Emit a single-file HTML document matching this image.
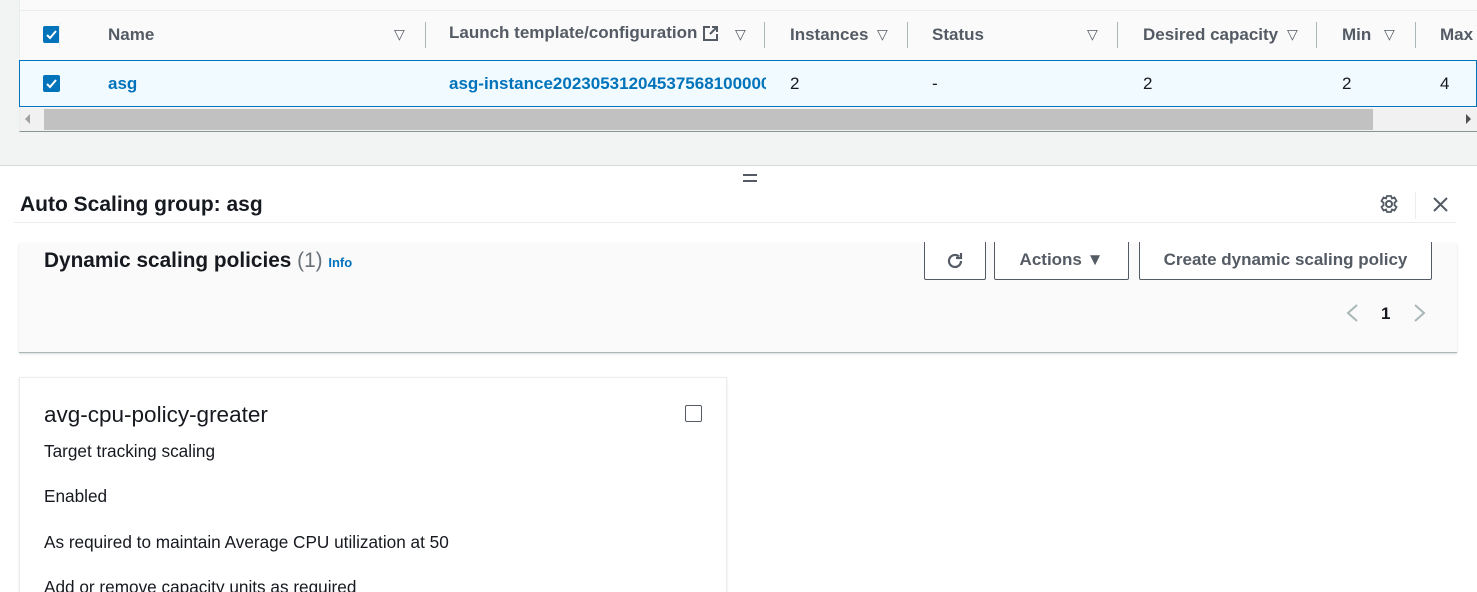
<!DOCTYPE html>
<html style="overflow:hidden;height:592px"><head><style>
*{box-sizing:border-box;margin:0;padding:0}
body{width:1477px;height:592px;overflow:hidden;background:#fff;font-family:"Liberation Sans",sans-serif;color:#16191f;position:relative}
.a{position:absolute}
.top{left:0;top:0;width:1477px;height:166px;background:#f2f3f3;border-bottom:1px solid #d5dbdb}
.tbl{left:19px;top:0;width:1458px;height:132px;background:#fafafa;border-bottom:1px solid #879596;border-left:1px solid #eaeded}
.h{top:25px;font-size:17px;font-weight:bold;color:#545b64}
.tri{font-size:14px;color:#545b64;top:26px}
.sep{top:22px;width:1px;height:26px;background:#aab7b8}
.cb{width:17px;height:17px;background:#0073bb;border-radius:2px}
.cb svg{display:block}
.row{left:19px;top:60px;width:1458px;height:47px;background:#f1faff;border:1px solid #0073bb}
.c{top:74px;font-size:17px;color:#16191f}
.lnk{color:#0073bb;font-weight:bold}
.btn{top:242px;height:38px;border:1px solid #545b64;border-top:none;border-radius:0 0 2px 2px;background:#fff;font-weight:bold;font-size:17px;color:#545b64;text-align:center;line-height:36px}
.t{font-size:17.2px;left:44px}
</style></head><body>
<div class="a top"></div>
<div class="a tbl"></div>
<div class="a" style="left:19px;top:10px;width:1458px;height:1px;background:#eaeded"></div>
<div class="a cb" style="left:43px;top:26px"><svg width="17" height="17"><path d="M4 9l3 3 6-7" stroke="#fff" stroke-width="2" fill="none"/></svg></div>
<div class="a sep" style="left:59px;background:#eaeded"></div>
<div class="a h" style="left:108px">Name</div><div class="a tri" style="left:394px">▽</div>
<div class="a sep" style="left:425px"></div>
<div class="a h" style="left:449px;top:23px">Launch template/configuration</div>
<svg class="a" style="left:702px;top:25px" width="17" height="17"><path d="M8 2H2v13h13V9M10 2h5v5M15 2L8 9" stroke="#545b64" stroke-width="2" fill="none"/></svg>
<div class="a tri" style="left:735px">▽</div>
<div class="a sep" style="left:764px"></div>
<div class="a h" style="left:790px">Instances</div><div class="a tri" style="left:877px">▽</div>
<div class="a sep" style="left:907px"></div>
<div class="a h" style="left:932px">Status</div><div class="a tri" style="left:1087px">▽</div>
<div class="a sep" style="left:1117px"></div>
<div class="a h" style="left:1143px">Desired capacity</div><div class="a tri" style="left:1287px">▽</div>
<div class="a sep" style="left:1316px"></div>
<div class="a h" style="left:1342px">Min</div><div class="a tri" style="left:1384px">▽</div>
<div class="a sep" style="left:1415px"></div>
<div class="a h" style="left:1440px">Max</div>
<div class="a row"></div>
<div class="a cb" style="left:43px;top:75px"><svg width="17" height="17"><path d="M4 9l3 3 6-7" stroke="#fff" stroke-width="2" fill="none"/></svg></div>
<div class="a c lnk" style="left:108px">asg</div>
<div class="a c lnk" style="left:449px;width:317px;overflow:hidden;white-space:nowrap">asg-instance20230531204537568100000</div>
<div class="a c" style="left:790px">2</div>
<div class="a c" style="left:932px">-</div>
<div class="a c" style="left:1143px">2</div>
<div class="a c" style="left:1342px">2</div>
<div class="a c" style="left:1440px">4</div>
<div class="a" style="left:20px;top:108px;width:1457px;height:23px;background:#f1f1f1"></div>
<div class="a" style="left:44px;top:109px;width:1329px;height:21px;background:#c1c1c1"></div>
<div class="a" style="left:25px;top:114px;width:0;height:0;border:5px solid transparent;border-right-color:#a3a3a3;border-left:none"></div>
<div class="a" style="left:1466px;top:114px;width:0;height:0;border:5px solid transparent;border-left-color:#505050;border-right:none"></div>
<div class="a" style="left:743px;top:174px;width:14px;height:2px;background:#545b64"></div>
<div class="a" style="left:743px;top:180px;width:14px;height:2px;background:#545b64"></div>
<div class="a" style="left:20px;top:193px;font-size:21px;font-weight:bold">Auto Scaling group: asg</div>
<svg class="a" style="left:1379px;top:194px" width="20" height="20" viewBox="0 0 20 20"><circle cx="10" cy="10" r="3" stroke="#545b64" stroke-width="2" fill="none"/><path d="M8 2h4l1 2.5 2.5-1 2 3.5-2 1.7v2.6l2 1.7-2 3.5-2.5-1L12 18H8l-1-2.5-2.5 1-2-3.5 2-1.7V8.7l-2-1.7 2-3.5 2.5 1z" stroke="#545b64" stroke-width="1.8" fill="none"/></svg>
<div class="a" style="left:1415px;top:192px;width:1px;height:27px;background:#eaeded"></div>
<svg class="a" style="left:1432px;top:196px" width="17" height="17"><path d="M2 2l13 13M15 2L2 15" stroke="#545b64" stroke-width="2"/></svg>
<div class="a" style="left:14px;top:222px;width:1442px;height:1px;background:#eaeded"></div>
<div class="a" style="left:19px;top:243px;width:1438px;height:110px;background:#fafafa;border-bottom:1px solid #aab7b8;box-shadow:0 1px 2px rgba(0,0,0,.15)"></div>
<div class="a" style="left:44px;top:249px;font-size:20.8px;font-weight:bold">Dynamic scaling policies <span style="font-weight:normal;color:#687078">(1)</span> <span style="font-size:13px;color:#0073bb;font-weight:bold">Info</span></div>
<div class="a btn" style="left:924px;width:62px"><svg width="22" height="22" viewBox="0 0 22 22" style="margin-top:8px"><path d="M17 11a6 6 0 1 1-2-4.5" stroke="#545b64" stroke-width="2.2" fill="none"/><path d="M17 3v5h-5" stroke="#545b64" stroke-width="2.2" fill="none"/></svg></div>
<div class="a btn" style="left:994px;width:135px">Actions ▼</div>
<div class="a btn" style="left:1139px;width:293px">Create dynamic scaling policy</div>
<svg class="a" style="left:1345px;top:303px" width="14" height="20"><path d="M12 2L3 10l9 8" stroke="#aab7b8" stroke-width="2" fill="none"/></svg>
<div class="a" style="left:1381px;top:304px;font-size:17px;font-weight:bold">1</div>
<svg class="a" style="left:1413px;top:303px" width="14" height="20"><path d="M2 2l9 8-9 8" stroke="#aab7b8" stroke-width="2" fill="none"/></svg>
<div class="a" style="left:19px;top:377px;width:708px;height:215px;border:1px solid #eaeded;border-bottom:none;box-shadow:0 1px 2px rgba(0,0,0,.1)"></div>
<div class="a" style="left:44px;top:402px;font-size:22.5px">avg-cpu-policy-greater</div>
<div class="a" style="left:685px;top:405px;width:17px;height:17px;border:1.5px solid #545b64;border-radius:2px"></div>
<div class="a t" style="top:441px">Target tracking scaling</div>
<div class="a t" style="top:486px">Enabled</div>
<div class="a t" style="top:532px">As required to maintain Average CPU utilization at 50</div>
<div class="a t" style="top:577px">Add or remove capacity units as required</div>
</body></html>
